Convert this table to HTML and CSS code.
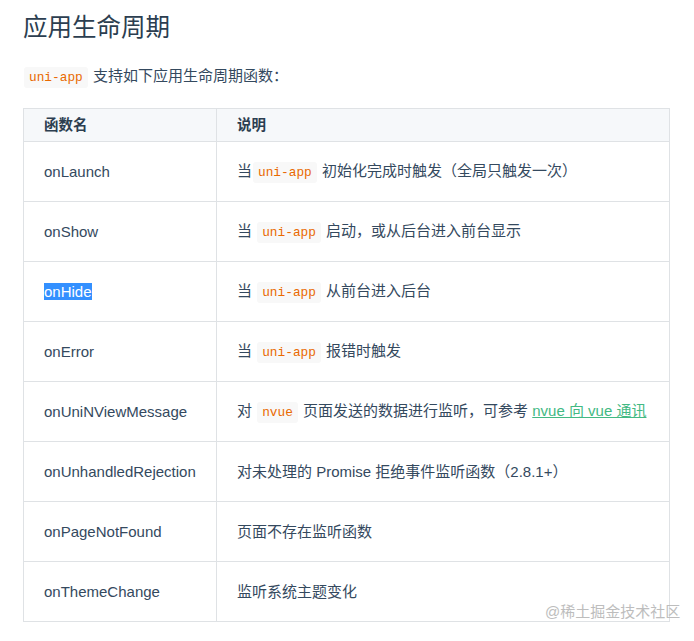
FILE: index.html
```html
<!DOCTYPE html>
<html lang="zh-CN">
<head>
<meta charset="utf-8">
<title>应用生命周期</title>
<link rel="stylesheet" href="styles.css">
</head>
<body>
<div class="page">
  <h2 class="title">应用生命周期</h2>
  <p class="intro"><code>uni-app</code> 支持如下应用生命周期函数：</p>
  <table class="api">
    <thead>
      <tr><th class="c1">函数名</th><th>说明</th></tr>
    </thead>
    <tbody>
      <tr><td>onLaunch</td><td>当<code>uni-app</code> 初始化完成时触发（全局只触发一次）</td></tr>
      <tr><td>onShow</td><td>当 <code>uni-app</code> 启动，或从后台进入前台显示</td></tr>
      <tr><td><span class="sel">onHide</span></td><td>当 <code>uni-app</code> 从前台进入后台</td></tr>
      <tr><td>onError</td><td>当 <code>uni-app</code> 报错时触发</td></tr>
      <tr><td>onUniNViewMessage</td><td>对 <code>nvue</code> 页面发送的数据进行监听，可参考 <a href="#">nvue 向 vue 通讯</a></td></tr>
      <tr><td>onUnhandledRejection</td><td>对未处理的 Promise 拒绝事件监听函数（2.8.1+）</td></tr>
      <tr><td>onPageNotFound</td><td>页面不存在监听函数</td></tr>
      <tr><td>onThemeChange</td><td>监听系统主题变化</td></tr>
    </tbody>
  </table>
  <div class="watermark">@稀土掘金技术社区</div>
</div>
</body>
</html>
```

FILE: styles.css
```css
html, body {
  margin: 0;
  padding: 0;
  background: #fff;
}
body {
  font-family: "Liberation Sans", "Noto Sans CJK SC", sans-serif;
  color: #34495e;
  font-size: 15px;
}
.page {
  position: relative;
  padding: 12px 24px 0 23px;
  height: 629px;
}
.title {
  margin: 0;
  font-size: 24.5px;
  line-height: 32px;
  font-weight: 400;
  color: #2c3e50;
}
.intro {
  margin: 20px 0 18px;
  line-height: 24px;
}
code {
  font-family: "Liberation Mono", "DejaVu Sans Mono", monospace;
  font-size: 12.8px;
  color: #e96900;
  background: #f8f8f8;
  padding: 3px 5px;
  margin: 0 1px 0 1px;
  border-radius: 3px;
}
.api {
  border-collapse: collapse;
  width: 647px;
}
.api th, .api td {
  border: 1px solid #dfe2e5;
  text-align: left;
  padding: 0 8px 0 20px;
  line-height: 20px;
  white-space: nowrap;
}
.api th {
  background: #f6f8fa;
  font-weight: 700;
  height: 32px;
  font-size: 14.5px;
  color: #2c3e50;
}
.api th.c1 {
  width: 164px;
}
.api td {
  height: 59px;
}
.sel {
  background: #3390ff;
  color: #fff;
}
a {
  color: #42b983;
  text-decoration: underline;
}
.watermark {
  position: absolute;
  left: 545px;
  top: 602px;
  font-size: 15px;
  color: #bdbdbd;
  line-height: 20px;
}
```
